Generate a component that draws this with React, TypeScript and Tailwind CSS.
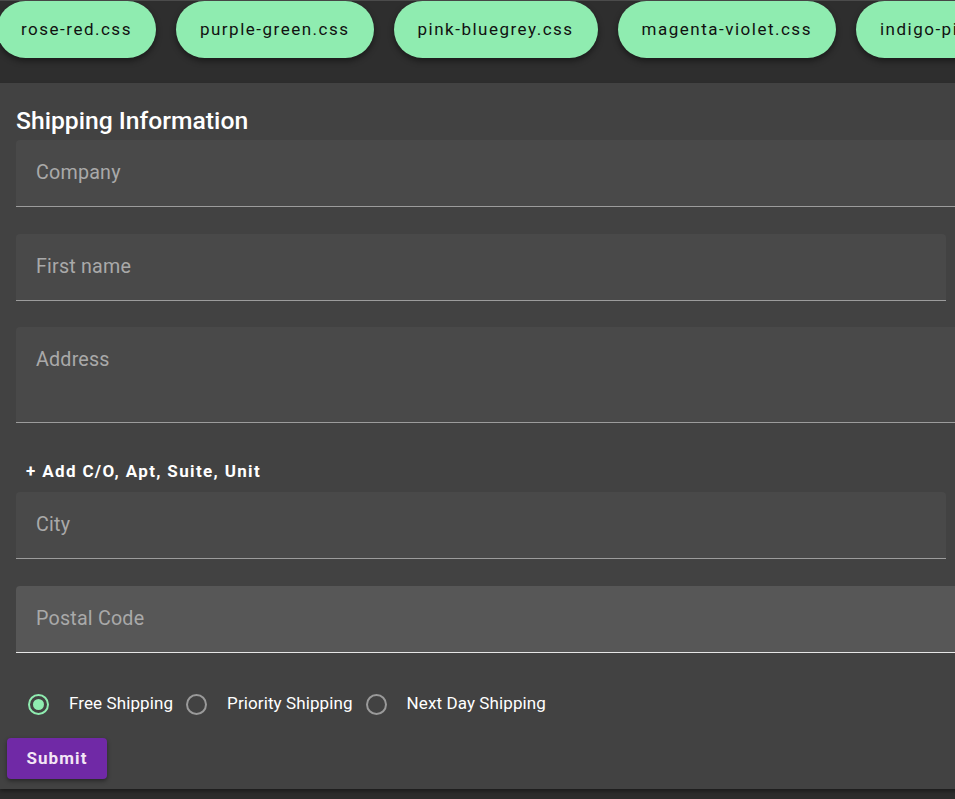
import React from "react";

const chips = ["rose-red.css", "purple-green.css", "pink-bluegrey.css", "magenta-violet.css", "indigo-pink.css"];

function Field({ label, wide, tall, hover }: { label: string; wide?: boolean; tall?: boolean; hover?: boolean }) {
  return (
    <div
      className={`${wide ? "w-[1100px]" : "w-[930px]"} ${tall ? "h-[96px]" : "h-[67px]"} ${
        hover ? "bg-[#575757] border-[#e6e6e6]" : "bg-[#494949] border-[#9c9c9c]"
      } rounded-t-[4px] border-b px-[20px] pt-[21px]`}
    >
      <div className="text-[19.7px] leading-[24px] text-[#a9a9a9] tracking-[0.2px]">{label}</div>
    </div>
  );
}

function Radio({ checked, label }: { checked?: boolean; label: string }) {
  return (
    <div className="flex items-center">
      <div
        className={`w-[21px] h-[21px] rounded-full border-2 flex items-center justify-center ${
          checked ? "border-[#8fecb0]" : "border-[#9a9a9a]"
        }`}
      >
        {checked && <div className="w-[11px] h-[11px] rounded-full bg-[#8fecb0]" />}
      </div>
      <span className="ml-[20px] text-[17px] text-white tracking-[0.1px]">{label}</span>
    </div>
  );
}

export default function App() {
  return (
    <div className="w-[955px] h-[799px] overflow-hidden bg-[#2c2c2c] font-['Roboto',sans-serif]">
      <div className="h-[83px] border-t border-[#4b4b4b] bg-[#2e2e2e]">
        <div className="flex gap-[20px] ml-[-3px] w-[1400px]">
          {chips.map((c) => (
            <div
              key={c}
              className="h-[57px] px-[24px] rounded-full bg-[#8fecb0] flex items-center text-[17px] text-[#111] tracking-[1.5px] shadow-[0_3px_6px_rgba(0,0,0,0.45)] whitespace-nowrap"
            >
              {c}
            </div>
          ))}
        </div>
      </div>
      <div className="bg-[#424242] w-[1200px] pl-[16px] pb-[10px] shadow-[0_2px_4px_rgba(0,0,0,0.4)]">
        <div className="pt-[24px] text-[24.7px] leading-[28px] font-medium text-white">Shipping Information</div>
        <div className="mt-[5px]">
          <Field label="Company" wide />
        </div>
        <div className="mt-[27px]">
          <Field label="First name" />
        </div>
        <div className="mt-[26px]">
          <Field label="Address" wide tall />
        </div>
        <div className="mt-[36px] ml-[10px] h-[24px] leading-[24px] text-[17px] font-bold text-white tracking-[1.35px]">
          + Add C/O, Apt, Suite, Unit
        </div>
        <div className="mt-[9px]">
          <Field label="City" />
        </div>
        <div className="mt-[27px]">
          <Field label="Postal Code" wide hover />
        </div>
        <div className="mt-[30px] h-[42px] flex items-center pl-[12px] gap-[13px]">
          <Radio checked label="Free Shipping" />
          <Radio label="Priority Shipping" />
          <Radio label="Next Day Shipping" />
        </div>
        <div className="mt-[13px] ml-[-9px]">
          <button className="w-[100px] h-[41px] rounded-[4px] bg-[#7029a6] text-[17px] font-bold text-[#f3e6f5] tracking-[1.1px] shadow-[0_2px_4px_rgba(0,0,0,0.4)]">
            Submit
          </button>
        </div>
      </div>
    </div>
  );
}
